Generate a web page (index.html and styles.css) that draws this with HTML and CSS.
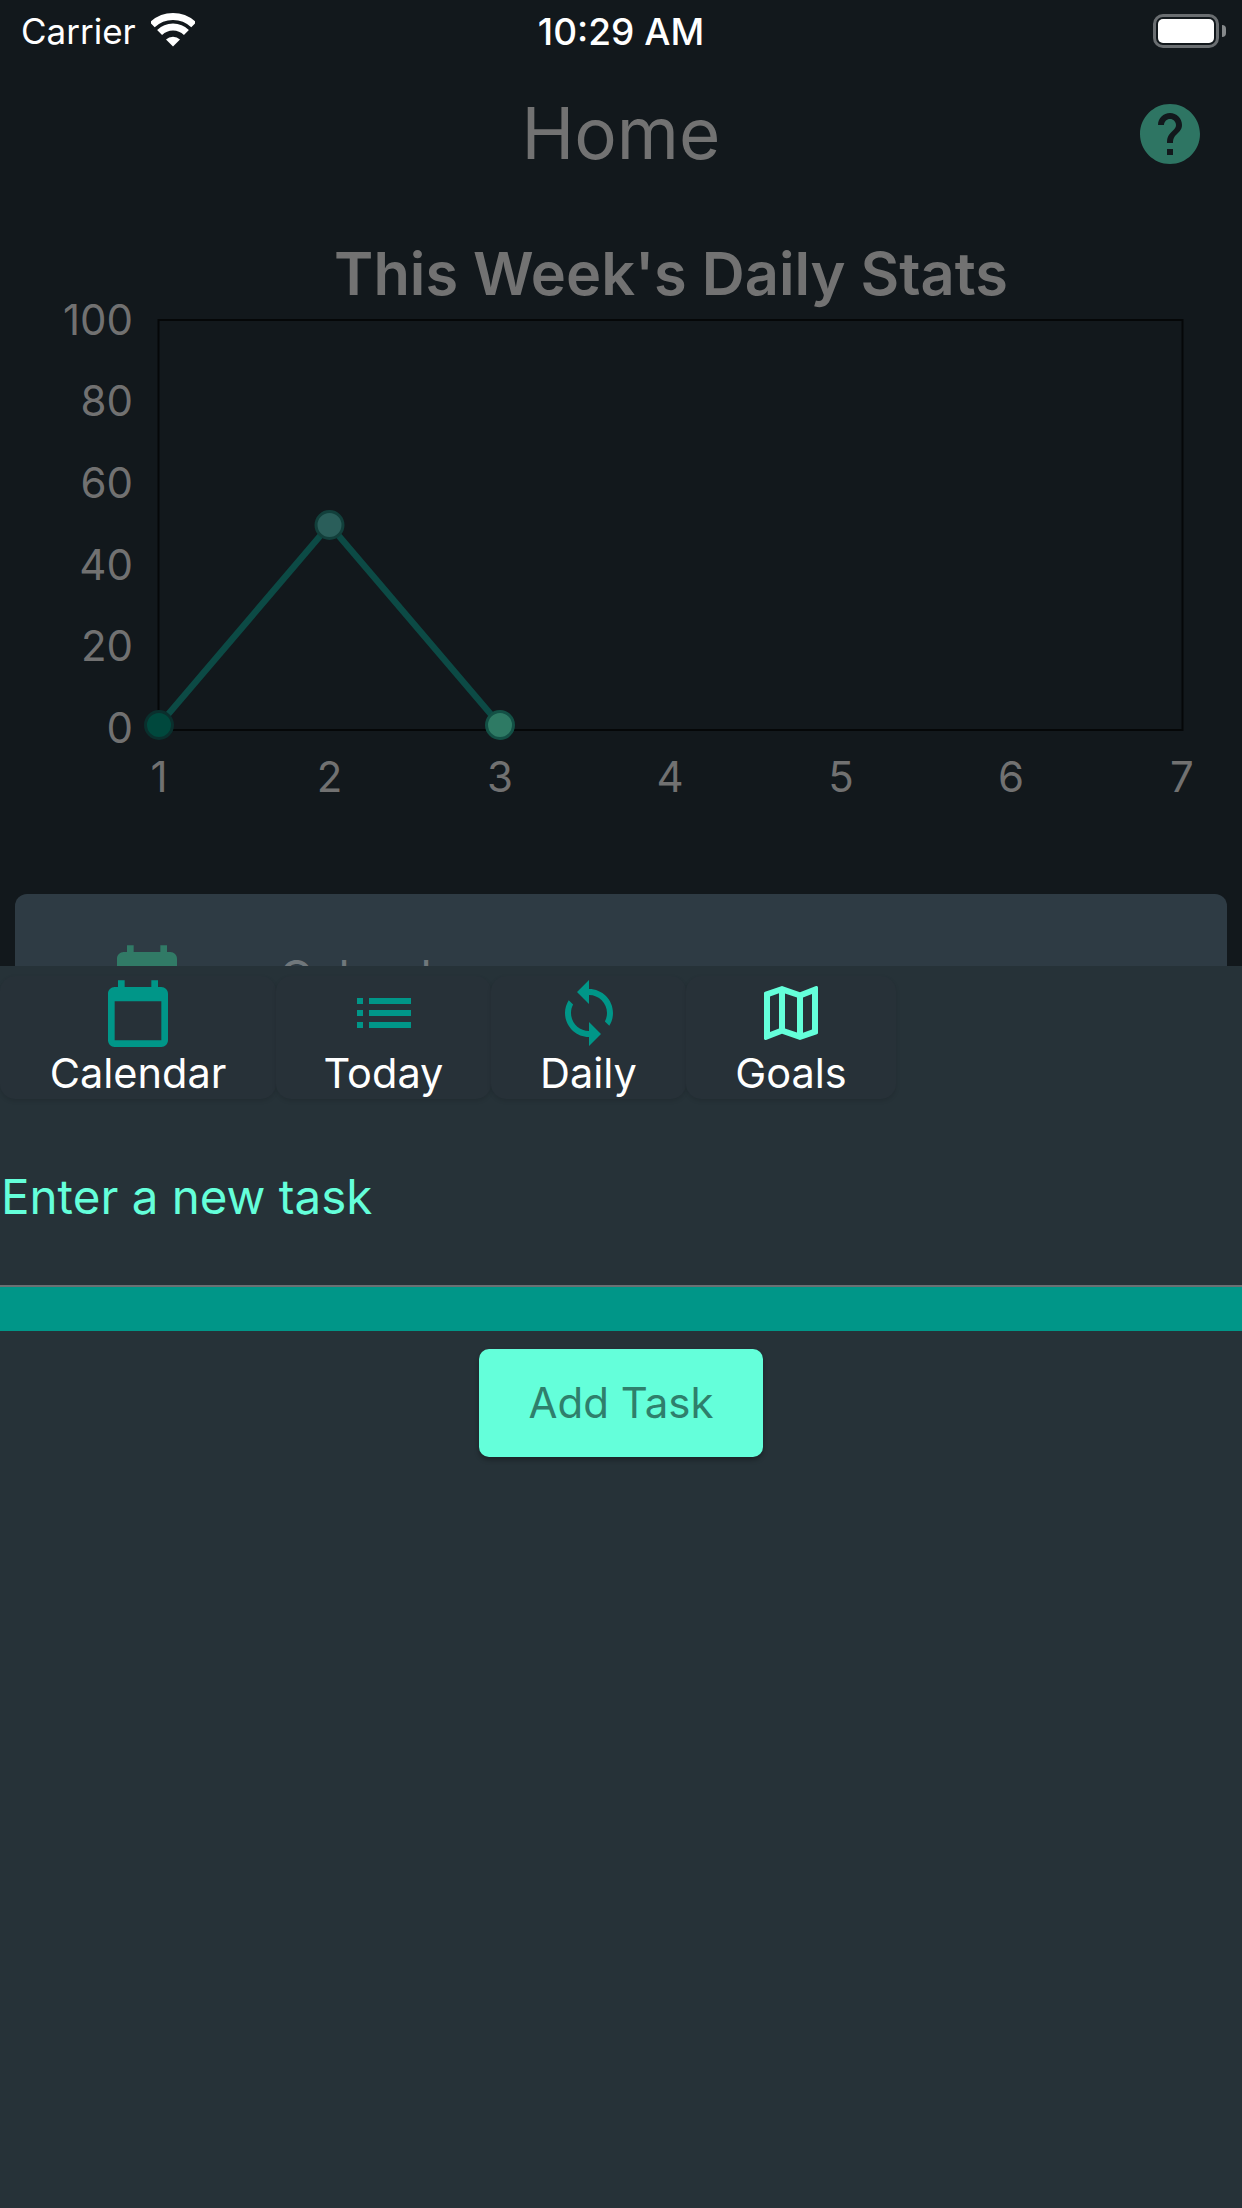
FILE: index.html
```html
<!DOCTYPE html>
<html lang="en">
<head>
  <meta charset="UTF-8">
  <title>Home</title>
  <link rel="stylesheet" href="styles.css">
</head>
<body>
  <div class="screen">
    <div class="status-bar">
      <div class="status-left">
        <span>Carrier</span>
        <svg class="wifi" viewBox="0 0 44 34">
          <path class="wifi-arc" d="M1.3 11.8A30 30 0 0 1 42.7 11.8"/>
          <path class="wifi-arc" d="M8.6 19.6A19 19 0 0 1 35.4 19.6"/>
          <path class="wifi-dot" d="M22 33.5L15 26.5A10 10 0 0 1 29 26.5Z"/>
        </svg>
      </div>
      <div class="status-time">10:29 AM</div>
      <div class="status-right">
        <div class="battery"><div class="battery-level"></div></div>
        <div class="battery-nub"></div>
      </div>
    </div>

    <div class="header">
      <h1>Home</h1>
      <svg class="help" viewBox="0 0 24 24">
        <path d="M12 2C6.48 2 2 6.48 2 12s4.48 10 10 10 10-4.48 10-10S17.52 2 12 2zm1 17h-2v-2h2v2zm2.07-7.75l-.9.92C13.45 12.9 13 13.5 13 15h-2v-.5c0-1.1.45-2.1 1.17-2.83l1.24-1.26c.37-.36.59-.86.59-1.41 0-1.1-.9-2-2-2s-2 .9-2 2H8c0-2.21 1.79-4 4-4s4 1.79 4 4c0 .88-.36 1.68-.93 2.25z"/>
      </svg>
    </div>

    <h2 class="chart-title">This Week's Daily Stats</h2>
    <svg class="chart" viewBox="0 280 1242 530">
      <rect class="plot" x="158.5" y="320" width="1024" height="410"/>
      <g class="y-labels">
        <text x="133" y="335">100</text>
        <text x="133" y="416">80</text>
        <text x="133" y="498">60</text>
        <text x="133" y="580">40</text>
        <text x="133" y="661">20</text>
        <text x="133" y="743">0</text>
      </g>
      <g class="x-labels">
        <text x="159" y="792">1</text>
        <text x="329.5" y="792">2</text>
        <text x="500" y="792">3</text>
        <text x="670" y="792">4</text>
        <text x="841" y="792">5</text>
        <text x="1011" y="792">6</text>
        <text x="1182" y="792">7</text>
      </g>
      <polyline class="line" points="159,725 329.5,525 500,725"/>
      <circle class="dot dot-1" cx="159" cy="725" r="13.5"/>
      <circle class="dot dot-2" cx="329.5" cy="525" r="13.5"/>
      <circle class="dot dot-3" cx="500" cy="725" r="13.5"/>
    </svg>

    <div class="card">
      <svg class="card-icon" viewBox="0 0 24 24">
        <path d="M19 3H18V1H16V3H8V1H6V3H5C3.89 3 3 3.89 3 5V19C3 20.1 3.89 21 5 21H19C20.1 21 21 20.1 21 19V5C21 3.89 20.1 3 19 3M19 19H5V7.3H19V19Z"/>
      </svg>
      <span class="card-label">Calendar</span>
    </div>

    <div class="modal">
      <div class="tabs">
        <div class="tab">
          <svg class="tab-icon icon-calendar" viewBox="0 0 24 24">
            <path d="M19 3H18V1H16V3H8V1H6V3H5C3.89 3 3 3.89 3 5V19C3 20.1 3.89 21 5 21H19C20.1 21 21 20.1 21 19V5C21 3.89 20.1 3 19 3M19 19H5V7.3H19V19Z"/>
          </svg>
          <span class="tab-label">Calendar</span>
        </div>
        <div class="tab">
          <svg class="tab-icon" viewBox="0 0 24 24">
            <path d="M3 13h2v-2H3v2zm0 4h2v-2H3v2zm0-8h2V7H3v2zm4 4h14v-2H7v2zm0 4h14v-2H7v2zM7 7v2h14V7H7z"/>
          </svg>
          <span class="tab-label">Today</span>
        </div>
        <div class="tab">
          <svg class="tab-icon" viewBox="0 0 24 24">
            <path d="M12 4V1L8 5l4 4V6c3.31 0 6 2.69 6 6 0 1.01-.25 1.97-.7 2.8l1.46 1.46C19.54 15.03 20 13.57 20 12c0-4.42-3.58-8-8-8zm0 14c-3.31 0-6-2.69-6-6 0-1.01.25-1.97.7-2.8L5.24 7.74C4.46 8.97 4 10.43 4 12c0 4.42 3.58 8 8 8v3l4-4-4-4v3z"/>
          </svg>
          <span class="tab-label">Daily</span>
        </div>
        <div class="tab tab-active">
          <svg class="tab-icon" viewBox="0 0 24 24">
            <path d="M20.5 3l-.16.03L15 5.1 9 3 3.36 4.9c-.21.07-.36.25-.36.48V20.5c0 .28.22.5.5.5l.16-.03L9 18.9l6 2.1 5.64-1.9c.21-.07.36-.25.36-.48V3.5c0-.28-.22-.5-.5-.5zM10 5.47l4 1.4v11.66l-4-1.4V5.47zm-5 .99l3-1.01v11.7l-3 1.16V6.46zm14 11.08l-3 1.01V6.86l3-1.16v11.84z"/>
          </svg>
          <span class="tab-label">Goals</span>
        </div>
      </div>

      <div class="field">Enter a new task</div>
      <div class="field-bar"></div>
      <div class="add-button">Add Task</div>
    </div>
  </div>
</body>
</html>
```

FILE: styles.css
```css
html, body { margin: 0; padding: 0; }
body { font-family: Inter, "Noto Sans", sans-serif; background: #12181c; }
.screen { position: relative; width: 1242px; height: 2208px; overflow: hidden; background: #12181c; }

.status-bar { display: grid; grid-template-columns: 1fr auto 1fr; align-items: center; box-sizing: border-box; height: 60px; padding-top: 2px; color: #fff; font-size: 35px; }
.status-left { display: flex; align-items: center; gap: 15px; padding-left: 21px; }
.status-time { font-size: 37px; font-weight: 500; }
.status-right { display: flex; align-items: center; justify-content: flex-end; gap: 3px; padding-right: 16px; }
.wifi { width: 44px; height: 34px; margin-top: -2px; }
.wifi-arc { fill: none; stroke: #fff; stroke-width: 7; }
.wifi-dot { fill: #fff; }
.battery { box-sizing: border-box; width: 66px; height: 34px; padding: 2px; border: 3px solid #6a6e71; border-radius: 10px; }
.battery-level { height: 100%; background: #fff; border-radius: 5px; }
.battery-nub { width: 4px; height: 12px; background: #85898b; border-radius: 0 6px 6px 0; }

.header { position: relative; height: 146px; text-align: center; }
.header h1 { margin: 0; font-size: 71px; font-weight: 400; line-height: 146px; color: #727272; }
.help { position: absolute; top: 38px; right: 36px; width: 72px; height: 72px; fill: #2e7563; }

.chart-title { margin: 0; padding: 40px 0 0 100px; font-size: 59.5px; font-weight: 600; line-height: 54px; text-align: center; color: #727272; }
.chart { display: block; width: 1242px; height: 530px; margin: -20px 0 84px; }
.plot { fill: #12181c; stroke: #050708; stroke-width: 2; }
.y-labels text, .x-labels text { font-family: Inter, sans-serif; font-size: 42px; fill: #717171; }
.y-labels text { text-anchor: end; }
.x-labels text { text-anchor: middle; }
.line { fill: none; stroke: #0c4a45; stroke-width: 6.5; }
.dot { stroke-width: 3; }
.dot-1 { fill: #00483d; stroke: #0a2f2d; }
.dot-2 { fill: #2a5e5a; stroke: #123f3b; }
.dot-3 { fill: #2e7a64; stroke: #135045; }

.card { display: flex; align-items: flex-start; margin: 0 15px; padding: 48px 0 0 92px; height: 300px; background: #2e3b44; border-radius: 12px; }
.card-icon { width: 80px; height: 80px; fill: #317a66; flex: none; }
.card-label { margin: -5px 0 0 92px; font-size: 46px; line-height: 80px; color: #70777b; }

/* sheet that lies over the dimmed page */
.modal { position: absolute; left: 0; right: 0; top: 966px; bottom: 0; padding-top: 10px; background: #263238; }
.tabs { display: grid; grid-template-columns: 276px 215px 195px 210px; }
.tab { display: flex; flex-direction: column; align-items: center; box-sizing: border-box; height: 123px; padding-top: 1px; background: #273138; border-radius: 15px; box-shadow: 0 2px 4px rgba(0, 0, 0, 0.12); }
.tab-icon { display: block; width: 72px; height: 72px; fill: #009688; }
.icon-calendar { width: 80px; height: 80px; margin-bottom: -8px; }
.tab-active .tab-icon { fill: #64ffda; }
.tab-label { font-size: 41.5px; line-height: 48px; color: #fff; }

.field { box-sizing: border-box; height: 188px; padding: 70px 0 0 1px; font-size: 47.5px; line-height: 56px; color: #64ffda; border-bottom: 2px solid #6b7073; }
.field-bar { height: 44px; background: #009688; }
.add-button { width: 284px; height: 108px; margin: 18px auto 0; font-size: 42px; line-height: 108px; text-align: center; color: #2f7f6c; background: #64ffda; border-radius: 10px; box-shadow: 0 3px 5px rgba(0, 0, 0, 0.3); }
```
